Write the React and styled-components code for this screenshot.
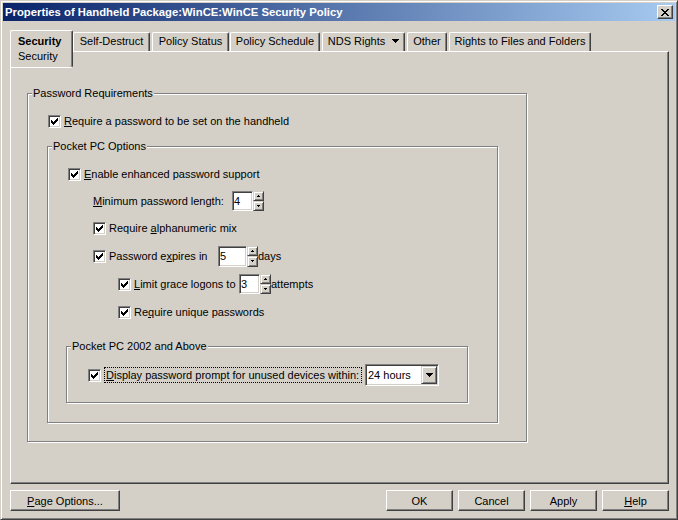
import React from 'react';
import styled, { createGlobalStyle } from 'styled-components';

const face = '#d4d0c8';
const shadow = '#808080';
const dark = '#404040';

const GlobalStyle = createGlobalStyle`
  html, body {
    margin: 0;
    padding: 0;
    background: ${face};
  }
  body {
    font-family: "Liberation Sans", Arial, sans-serif;
    font-size: 11px;
    color: #000;
  }
  * {
    box-sizing: border-box;
  }
`;

// pixel runs [x, y, w] -> path, for the tiny classic glyphs
const pix = (runs) => runs.map(([x, y, w]) => `M${x} ${y}h${w}v1h-${w}z`).join('');

const checkPath = pix([[7, 1, 1], [6, 2, 2], [1, 3, 1], [5, 3, 3], [1, 4, 2], [4, 4, 3], [1, 5, 5], [2, 6, 3], [3, 7, 1]]);
const closePath = pix([[0, 0, 2], [6, 0, 2], [1, 1, 2], [5, 1, 2], [2, 2, 4], [3, 3, 2], [2, 4, 4], [1, 5, 2], [5, 5, 2], [0, 6, 2], [6, 6, 2]]);
const downPath = pix([[0, 0, 7], [1, 1, 5], [2, 2, 3], [3, 3, 1]]);
const smallUp = pix([[2, 0, 1], [1, 1, 3]]);
const smallDown = pix([[1, 0, 3], [2, 1, 1]]);

const Glyph = ({ d, w, h }) => (
    <svg width={w} height={h} viewBox={`0 0 ${w} ${h}`} shapeRendering="crispEdges">
        <path d={d} fill="#000" />
    </svg>
);

const Window = styled.div`
    width: 678px;
    height: 520px;
    display: flex;
    flex-direction: column;
    background: ${face};
    border: 1px solid;
    border-color: ${face} ${dark} ${dark} ${face};
    box-shadow: inset 1px 1px 0 #fff, inset -1px -1px 0 ${shadow};
    padding: 2px;
`;

const TitleBar = styled.div`
    height: 18px;
    flex-shrink: 0;
    display: flex;
    align-items: center;
    justify-content: space-between;
    padding: 0 2px 0 2px;
    background: linear-gradient(to right, #0a246a, #a6caf0);
    color: #fff;
    font-weight: bold;
    font-size: 11.3px;
    white-space: nowrap;
`;

const CloseButton = styled.div`
    width: 16px;
    height: 14px;
    display: flex;
    align-items: center;
    justify-content: center;
    background: ${face};
    border: 1px solid;
    border-color: #fff ${dark} ${dark} #fff;
    box-shadow: inset -1px -1px 0 ${shadow};
`;

const Body = styled.div`
    flex: 1;
    display: flex;
    flex-direction: column;
    padding: 9px 6px 6px 7px;
`;

const TabStrip = styled.div`
    height: 21px;
    flex-shrink: 0;
    display: flex;
    align-items: flex-end;
    position: relative;
    z-index: 1;
`;

const ActiveTab = styled.div`
    align-self: flex-start;
    width: 63px;
    height: 38px;
    background: ${face};
    border: 1px solid;
    border-color: #fff ${dark} #fff #fff;
    box-shadow: inset -1px 0 0 ${shadow};
    border-radius: 2px 2px 3px 0;
    padding: 3px 0 0 7px;
    line-height: 15px;

    b {
        display: block;
    }
`;

const Tab = styled.div`
    width: ${p => p.$w}px;
    height: 19px;
    margin-left: ${p => p.$gap || 0}px;
    border: 1px solid;
    border-bottom: 0;
    border-color: #fff ${dark} transparent #fff;
    box-shadow: inset -1px 0 0 ${shadow};
    border-radius: 2px 2px 0 0;
    display: flex;
    align-items: center;
    justify-content: center;
    gap: 7px;
    padding-bottom: 2px;
    white-space: nowrap;
`;

const Panel = styled.div`
    flex: 1;
    border: 1px solid;
    border-color: #fff ${dark} ${dark} #fff;
    box-shadow: inset -1px -1px 0 ${shadow};
    padding: 41px 0 0 16px;
`;

const Group = styled.div`
    position: relative;
    width: ${p => p.$w}px;
    margin: ${p => p.$top || 0}px 0 0 ${p => p.$x || 0}px;
    padding: ${p => p.$pad};
    border: 1px solid ${shadow};
    box-shadow: 1px 1px 0 #fff, inset 1px 1px 0 #fff;
`;

const GroupTitle = styled.span`
    position: absolute;
    top: -7px;
    left: 4px;
    padding: 0 1px;
    line-height: 13px;
    background: ${face};
    white-space: nowrap;
`;

const Row = styled.div`
    display: flex;
    align-items: center;
    height: ${p => p.$h || 28}px;
    padding-left: ${p => p.$x || 0}px;
    white-space: nowrap;
`;

const Box = styled.span`
    width: 13px;
    height: 13px;
    flex-shrink: 0;
    margin-right: 3px;
    display: flex;
    align-items: center;
    justify-content: center;
    background: #fff;
    border: 1px solid;
    border-color: ${shadow} #fff #fff ${shadow};
    box-shadow: inset 1px 1px 0 ${dark}, inset -1px -1px 0 ${face};
`;

const Text = styled.span`
    flex-shrink: 0;
    width: ${p => (p.$w ? `${p.$w}px` : 'auto')};
`;

const Key = styled.span`
    text-decoration: underline;
    text-underline-offset: 1px;
`;

const FocusText = styled.span`
    width: 258px;
    flex-shrink: 0;
    border: 1px dotted #000;
    padding-left: 1px;
    line-height: 14px;
`;

const Edit = styled.div`
    width: ${p => p.$w}px;
    height: ${p => p.$h}px;
    display: flex;
    align-items: center;
    padding-left: 1px;
    background: #fff;
    border: 1px solid;
    border-color: ${shadow} #fff #fff ${shadow};
    box-shadow: inset 1px 1px 0 ${dark}, inset -1px -1px 0 ${face};
`;

const Spinner = styled.div`
    width: 11px;
    height: ${p => p.$h}px;
    display: flex;
    flex-direction: column;
`;

const Raised = styled.div`
    display: flex;
    align-items: center;
    justify-content: center;
    background: ${face};
    border: 1px solid;
    border-color: ${face} ${dark} ${dark} ${face};
    box-shadow: inset 1px 1px 0 #fff, inset -1px -1px 0 ${shadow};
`;

const SpinButton = styled(Raised)`
    flex: 1;
`;

const Combo = styled.div`
    width: 74px;
    height: 22px;
    margin-left: 3px;
    display: flex;
    align-items: center;
    justify-content: space-between;
    padding: 1px 1px 1px 2px;
    background: #fff;
    border: 1px solid;
    border-color: ${shadow} #fff #fff ${shadow};
    box-shadow: inset 1px 1px 0 ${dark}, inset -1px -1px 0 ${face};
`;

const DropButton = styled(Raised)`
    width: 16px;
    height: 18px;
`;

const ButtonBar = styled.div`
    flex-shrink: 0;
    display: flex;
    align-items: center;
    gap: 5px;
    margin-top: 6px;
`;

const Spacer = styled.div`
    flex: 1;
`;

const Button = styled.button`
    width: ${p => p.$w || 67}px;
    height: 21px;
    padding: 0;
    font: inherit;
    color: #000;
    background: ${face};
    border: 1px solid;
    border-color: #fff ${dark} ${dark} #fff;
    box-shadow: inset -1px -1px 0 ${shadow};
`;

function Check({ children }) {
    return (
        <>
            <Box><Glyph d={checkPath} w={9} h={9} /></Box>
            {children}
        </>
    );
}

function Spin({ value, w, h }) {
    return (
        <>
            <Edit $w={w} $h={h}>{value}</Edit>
            <Spinner $h={h}>
                <SpinButton><Glyph d={smallUp} w={5} h={2} /></SpinButton>
                <SpinButton><Glyph d={smallDown} w={5} h={2} /></SpinButton>
            </Spinner>
        </>
    );
}

const tabs = [
    { label: 'Self-Destruct', w: 77, gap: 0 },
    { label: 'Policy Status', w: 77, gap: 2 },
    { label: 'Policy Schedule', w: 90, gap: 1 },
    { label: 'NDS Rights', w: 83, gap: 2, menu: true },
    { label: 'Other', w: 40, gap: 2 },
    { label: 'Rights to Files and Folders', w: 142, gap: 2 },
];

export default function App() {
    return (
        <>
            <GlobalStyle />
            <Window>
                <TitleBar>
                    <span>Properties of Handheld Package:WinCE:WinCE Security Policy</span>
                    <CloseButton><Glyph d={closePath} w={8} h={7} /></CloseButton>
                </TitleBar>
                <Body>
                    <TabStrip>
                        <ActiveTab>
                            <b>Security</b>
                            <span>Security</span>
                        </ActiveTab>
                        {tabs.map(t => (
                            <Tab key={t.label} $w={t.w} $gap={t.gap}>
                                <span>{t.label}</span>
                                {t.menu && <Glyph d={downPath} w={7} h={4} />}
                            </Tab>
                        ))}
                    </TabStrip>
                    <Panel>
                        <Group $w={500} $pad="16px 0 18px 0">
                            <GroupTitle>Password Requirements</GroupTitle>
                            <Row $h={22} $x={20}>
                                <Check><Text><Key>R</Key>equire a password to be set on the handheld</Text></Check>
                            </Row>
                            <Group $w={451} $top={14} $x={19} $pad="13px 0 19px 0">
                                <GroupTitle>Pocket PC Options</GroupTitle>
                                <Row $x={20}>
                                    <Check><Text><Key>E</Key>nable enhanced password support</Text></Check>
                                </Row>
                                <Row $h={26} $x={45}>
                                    <Text $w={139}><Key>M</Key>inimum password length:</Text>
                                    <Spin value="4" w={21} h={20} />
                                </Row>
                                <Row $x={45}>
                                    <Check><Text>Require <Key>a</Key>lphanumeric mix</Text></Check>
                                </Row>
                                <Row $x={45}>
                                    <Check><Text $w={109}>Password e<Key>x</Key>pires in</Text></Check>
                                    <Spin value="5" w={29} h={21} />
                                    <Text>days</Text>
                                </Row>
                                <Row $x={70}>
                                    <Check><Text $w={105}><Key>L</Key>imit grace logons to</Text></Check>
                                    <Spin value="3" w={21} h={20} />
                                    <Text>attempts</Text>
                                </Row>
                                <Row $x={70}>
                                    <Check><Text>Re<Key>q</Key>uire unique passwords</Text></Check>
                                </Row>
                                <Group $w={402} $top={20} $x={18} $pad="14px 0 13px 0">
                                    <GroupTitle>Pocket PC 2002 and Above</GroupTitle>
                                    <Row $x={21}>
                                        <Check>
                                            <FocusText><Key>D</Key>isplay password prompt for unused devices within:</FocusText>
                                        </Check>
                                        <Combo>
                                            <span>24 hours</span>
                                            <DropButton><Glyph d={downPath} w={7} h={4} /></DropButton>
                                        </Combo>
                                    </Row>
                                </Group>
                            </Group>
                        </Group>
                    </Panel>
                    <ButtonBar>
                        <Button $w={110}><Key>P</Key>age Options...</Button>
                        <Spacer />
                        <Button>OK</Button>
                        <Button>Cancel</Button>
                        <Button>Apply</Button>
                        <Button><Key>H</Key>elp</Button>
                    </ButtonBar>
                </Body>
            </Window>
        </>
    );
}
